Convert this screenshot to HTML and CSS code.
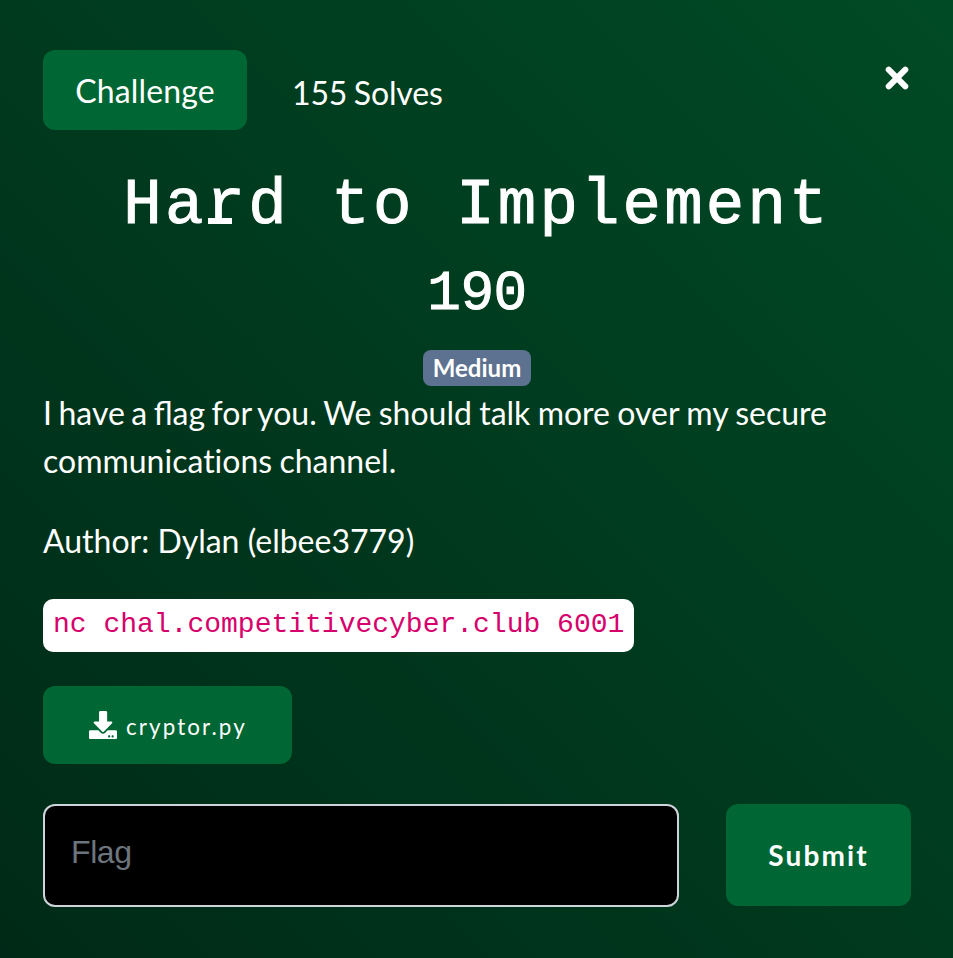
FILE: index.html
```html
<!DOCTYPE html>
<html lang="en">
<head>
<meta charset="utf-8">
<title>Hard to Implement</title>
<link rel="stylesheet" href="styles.css">
</head>
<body>
<main class="modal">
  <header class="top">
    <span class="tab">Challenge</span>
    <span class="solves">155 Solves</span>
    <button class="close" aria-label="Close">
      <svg width="24" height="24" viewBox="0 0 24 24"><path d="M3.700 3.700 20.300 20.300M20.300 3.700 3.700 20.300" stroke="#fff" stroke-width="6" stroke-linecap="round"/></svg>
    </button>
  </header>
  <h2 class="name">Ha<span class="slab">r</span>d to Implement</h2>
  <h3 class="value">190</h3>
  <div class="tags"><span class="tag">Medium</span></div>
  <section class="desc">
    <p class="intro"><span class="lead">I have a flag for you. </span>We should talk more over my secure <span class="plain">communications channel.</span></p>
    <p>Author: Dylan (elbee3779)</p>
    <p class="command"><code>nc chal.competitivecyber.club 6001</code></p>
  </section>
  <a class="file">
    <svg width="28" height="28" viewBox="0 0 512 512"><path fill="#fff" d="M208 0h100c13.300 0 24 10.700 24 24v168h75.700c17.800 0 26.700 21.500 14.100 34.100L269.700 378.300c-7.500 7.500-19.800 7.500-27.300 0L90.100 226.100c-12.600-12.600-3.700-34.100 14.100-34.100H184V24c0-13.300 10.700-24 24-24zm304 376v112c0 13.300-10.700 24-24 24H24c-13.300 0-24-10.700-24-24V376c0-13.300 10.700-24 24-24h146.700l49 49c20.100 20.100 52.500 20.100 72.600 0l49-49H488c13.300 0 24 10.700 24 24zm-124 88c0-11-9-20-20-20s-20 9-20 20 9 20 20 20 20-9 20-20zm64 0c0-11-9-20-20-20s-20 9-20 20 9 20 20 20 20-9 20-20z"/></svg>
    <span>cryptor.py</span>
  </a>
  <form class="answer">
    <input class="flag" type="text" placeholder="Flag">
    <button class="submit" type="button">Submit</button>
  </form>
</main>
</body>
</html>
```
FILE: styles.css
```css
* { box-sizing: border-box; }
body { margin: 0; }
.modal {
  width: 953px;
  height: 958px;
  padding: 50px 42px 0 43px;
  overflow: hidden;
  background: linear-gradient(45deg, #002a17, #004a25);
  color: #fff;
  font: 32px/48px Lato, sans-serif;
}
.top { display: flex; height: 80px; }
.tab {
  width: 204px;
  height: 80px;
  padding-top: 17px;
  border-radius: 12px;
  background: #006633;
  text-align: center;
  letter-spacing: 0.15px;
}
.solves { margin: 19px 0 0 45px; letter-spacing: -0.15px; word-spacing: -1.5px; }
.close {
  display: block;
  width: 24px;
  height: 24px;
  margin: 16px 2px 0 auto;
  padding: 0;
  border: 0;
  background: none;
}
.close svg { display: block; }
.name, .value {
  margin: 0;
  font-family: "Liberation Mono", monospace;
  font-weight: 400;
  text-align: center;
  -webkit-text-stroke: 1px #fff;
}
.name {
  margin-top: 38px;
  font-size: 64px;
  line-height: 77px;
  letter-spacing: 3.2px;
  white-space: nowrap;
}
.slab { position: relative; }
.slab::after {
  content: "";
  position: absolute;
  left: 1px;
  bottom: 18px;
  width: 24px;
  height: 6px;
  background: #fff;
}
.value { margin-top: 16px; font-size: 56px; line-height: 67px; letter-spacing: -0.5px; }
.tags { display: flex; justify-content: center; margin-top: 22px; }
.tag {
  width: 108px;
  height: 36px;
  border-radius: 8px;
  background: #5d7290;
  font-size: 24px;
  font-weight: 700;
  line-height: 36px;
  text-align: center;
}
.desc { margin-top: 3px; }
.desc p { margin: 0 0 32px; }
.desc .intro { word-spacing: -0.9px; }
.lead { word-spacing: -1.7px; }
.plain { font-variant-ligatures: none; }
.desc .command { margin-bottom: 0; line-height: 53px; margin-top: 34px; height: 53px; }
code {
  display: block;
  width: 591px;
  height: 53px;
  padding-left: 10px;
  border-radius: 10px;
  background: #fff;
  color: #d6006c;
  font: 28px/51px "Liberation Mono", monospace;
  white-space: nowrap;
}
.file {
  display: flex;
  align-items: center;
  width: 249px;
  height: 78px;
  margin-top: 34px;
  padding: 0 0 1px 46px;
  gap: 9px;
  border-radius: 12px;
  background: #006633;
  font-size: 22.4px;
  letter-spacing: 2.1px;
}
.file span { padding-top: 4px; }
.answer { display: flex; gap: 47px; margin-top: 40px; }
.flag {
  width: 636px;
  height: 103px;
  padding: 0 26px 7px;
  border: 2px solid #ced4da;
  border-radius: 12px;
  background: #000;
  color: #fff;
  font: 32px "Liberation Sans", sans-serif;
}
.flag::placeholder { color: #6c757d; opacity: 1; letter-spacing: -0.4px; }
.submit {
  width: 185px;
  height: 102px;
  padding: 0;
  border: 0;
  border-radius: 12px;
  background: #006633;
  color: #fff;
  font: 700 28px Lato, sans-serif;
  letter-spacing: 2.1px;
}
```
